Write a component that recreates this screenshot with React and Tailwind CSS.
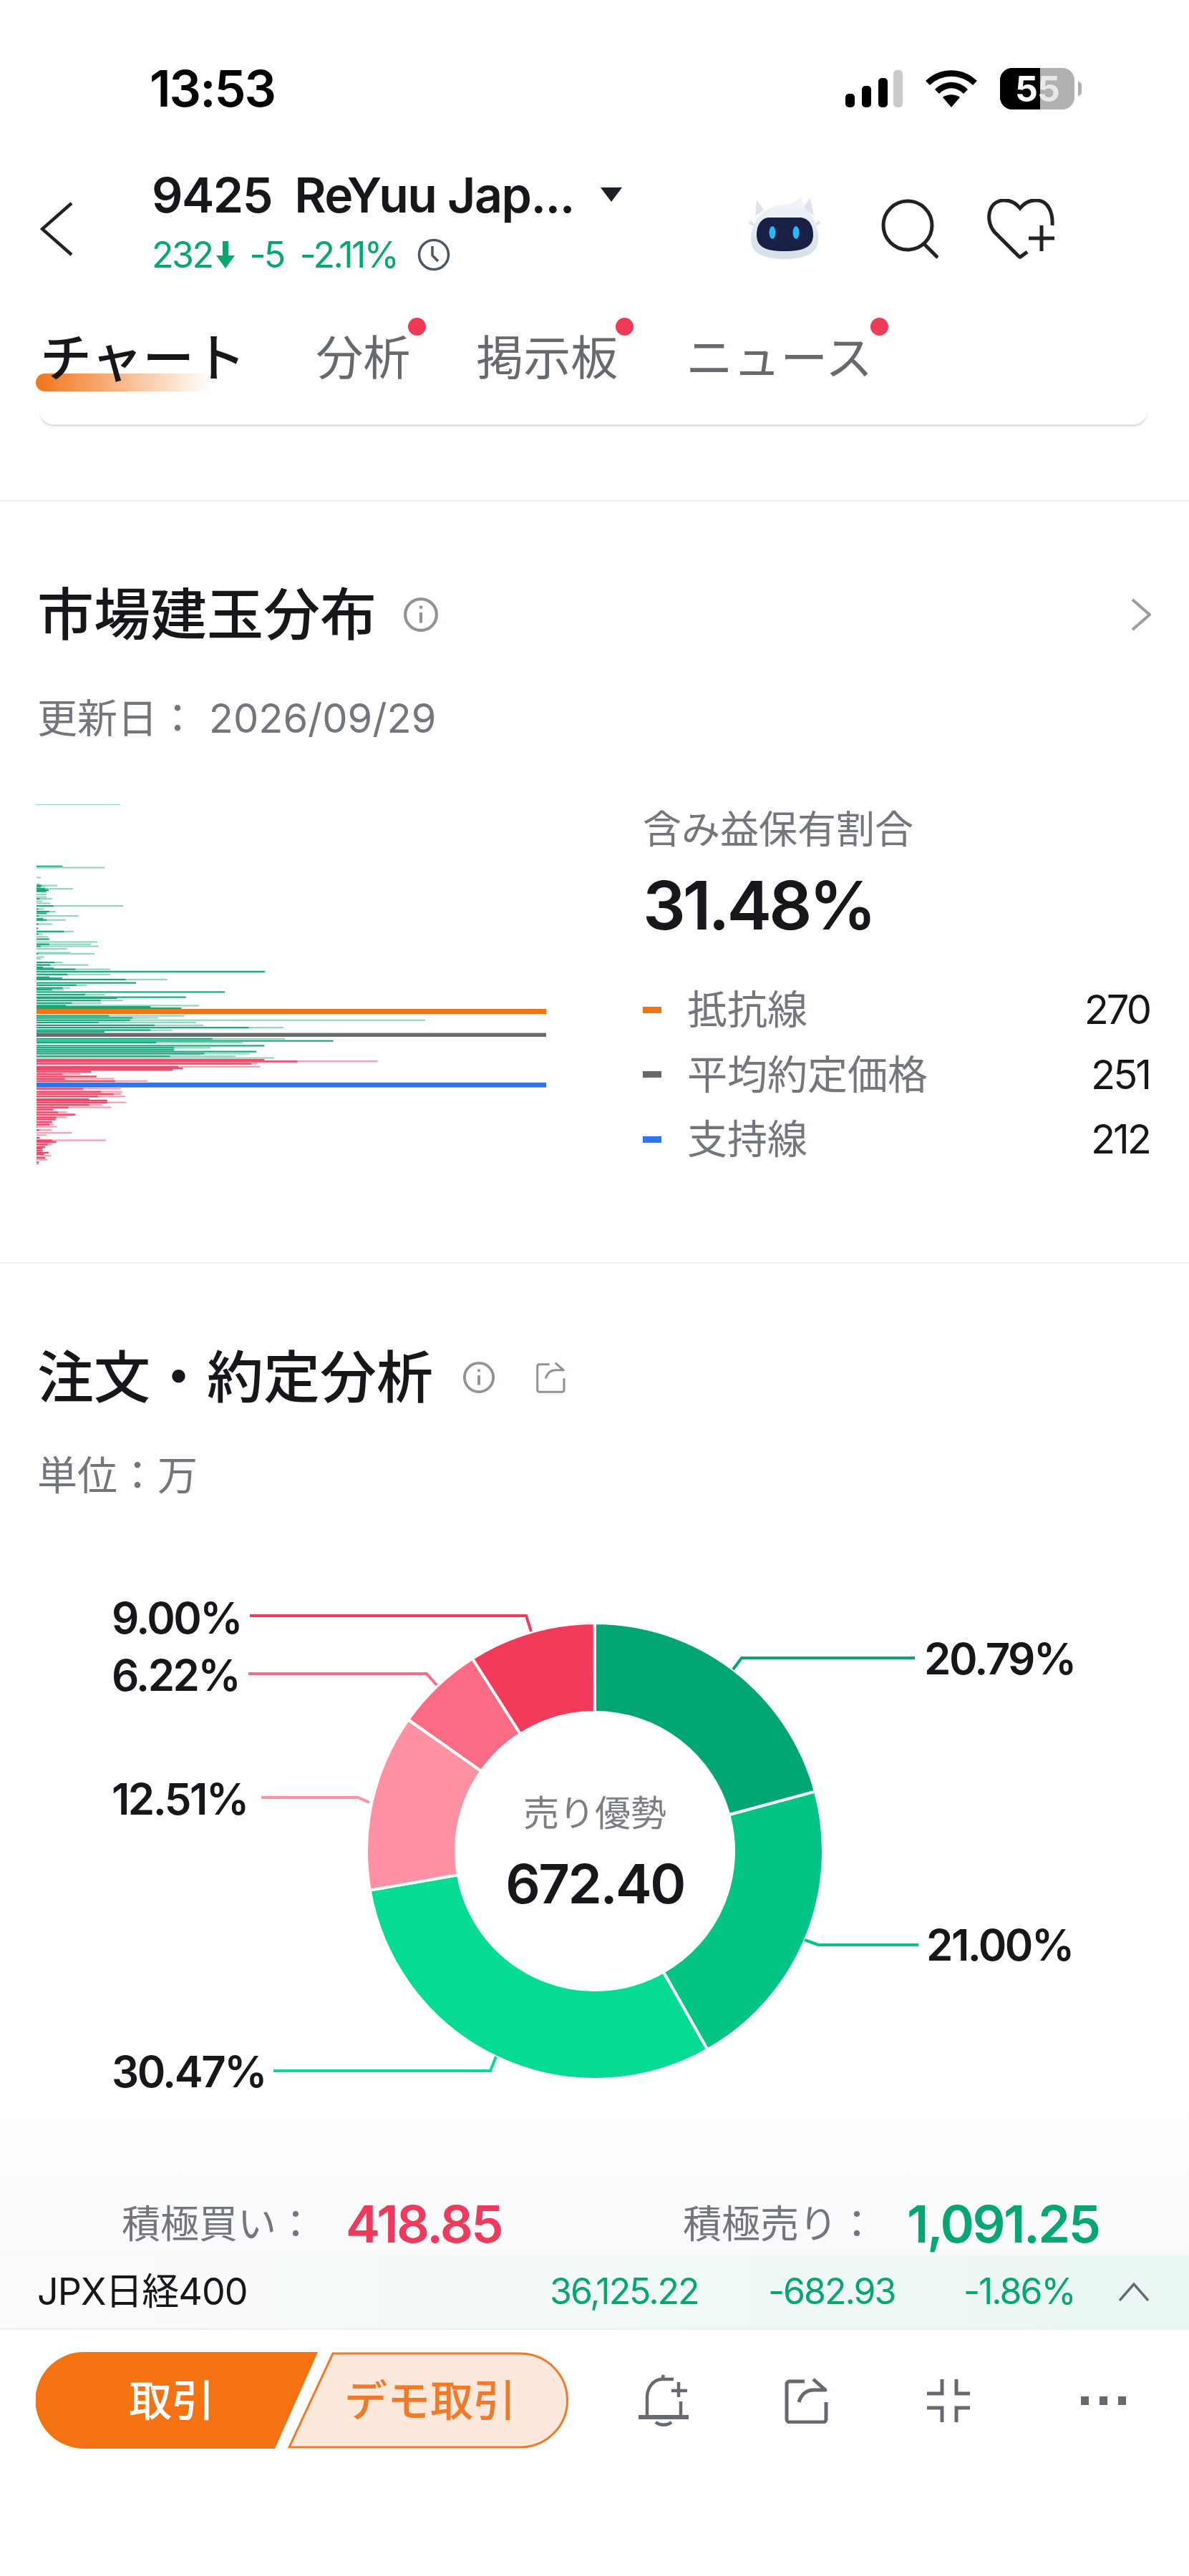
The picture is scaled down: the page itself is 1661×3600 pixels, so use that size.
import React from 'react';

// [y, darkEnd, lightEnd] in chart units: x and y as read off the picture
const bars = [
  [310, 118, 0], [315, 0, 240], [354, 0, 55], [380, 0, 52], [385, 58, 103], [390, 55, 68], [398, 68, 148], [403, 78, 0], [408, 72, 0],
  [420, 0, 72], [430, 0, 72], [437, 52, 88], [447, 0, 60], [455, 0, 83], [465, 92, 293], [477, 48, 65], [487, 80, 98], [494, 72, 0],
  [504, 50, 165], [515, 62, 0], [520, 72, 127], [536, 48, 88], [553, 48, 0], [565, 122, 150], [575, 48, 60], [586, 0, 77], [595, 80, 0],
  [606, 0, 218], [615, 80, 200], [623, 55, 222], [633, 0, 130], [648, 0, 140], [652, 48, 210], [665, 0, 65], [672, 0, 55], [686, 95, 118],
  [696, 82, 193], [705, 62, 0], [709, 93, 0], [713, 155, 255], [722, 702, 0], [733, 132, 256], [744, 80, 0], [748, 117, 0], [753, 300, 421],
  [766, 330, 0], [775, 158, 188], [786, 118, 140], [793, 88, 122], [802, 586, 0], [812, 183, 240], [822, 474, 0], [826, 275, 0], [835, 228, 292],
  [845, 145, 230], [855, 128, 512], [860, 372, 0], [865, 461, 0], [895, 252, 470], [903, 320, 393], [912, 313, 1164], [921, 222, 503],
  [932, 383, 524], [941, 655, 755], [951, 372, 435], [958, 240, 0], [985, 550, 760], [993, 899, 0], [1000, 388, 638], [1012, 700, 0],
  [1020, 440, 545], [1028, 440, 0], [1035, 677, 0], [1043, 527, 658], [1053, 428, 617], [1060, 0, 728],
];
const redBars = [
  [1067, 700, 0], [1073, 795, 1027], [1082, 662, 680], [1094, 452, 688], [1100, 465, 0], [1106, 436, 0], [1113, 200, 0], [1123, 117, 170],
  [1132, 216, 0], [1141, 125, 267], [1150, 270, 362], [1180, 178, 286], [1192, 228, 290], [1201, 265, 288], [1210, 220, 298], [1221, 195, 0],
  [1226, 247, 0], [1234, 247, 302], [1243, 195, 232], [1253, 135, 258], [1262, 92, 0], [1272, 105, 130], [1281, 155, 0], [1292, 100, 131],
  [1300, 98, 0], [1310, 88, 0], [1320, 80, 92], [1329, 45, 102], [1342, 50, 87], [1353, 0, 145], [1362, 0, 72], [1372, 52, 0], [1382, 88, 243],
  [1388, 100, 0], [1398, 75, 87], [1408, 68, 0], [1414, 60, 0], [1422, 60, 0], [1430, 78, 0], [1436, 65, 0], [1443, 0, 85], [1450, 68, 0],
  [1458, 0, 75], [1468, 50, 0], [1475, 0, 48],
];

const segments = [
  { pct: 20.79, color: '#02a672' },
  { pct: 21.0, color: '#04c485' },
  { pct: 30.47, color: '#05dc92' },
  { pct: 12.51, color: '#ff91a3' },
  { pct: 6.22, color: '#fb6c84' },
  { pct: 9.0, color: '#f23b5a' },
];

const leaders = [
  { points: '1024,2333 1036,2317 1278,2317', color: '#02a672' },
  { points: '1124,2711 1143,2718 1283,2718', color: '#04c485' },
  { points: '693,2874 685,2894 382,2894', color: '#05dc92' },
  { points: '516,2519 500,2512 365,2512', color: '#ff91a3' },
  { points: '610,2355 596,2339 347,2339', color: '#fb6c84' },
  { points: '742,2280 735,2258 349,2258', color: '#f23b5a' },
];

const arcPath = (from, to) => {
  const cx = 831, cy = 2587, R = 319, r = 194;
  const pt = (rad, p) => {
    const a = (p / 100) * Math.PI * 2 - Math.PI / 2;
    return `${(cx + rad * Math.cos(a)).toFixed(2)} ${(cy + rad * Math.sin(a)).toFixed(2)}`;
  };
  const large = to - from > 50 ? 1 : 0;
  return `M${pt(R, from)}A${R} ${R} 0 ${large} 1 ${pt(R, to)}L${pt(r, to)}A${r} ${r} 0 ${large} 0 ${pt(r, from)}Z`;
};

const Donut = () => {
  let acc = 0;
  return segments.map((s) => {
    const from = acc;
    acc += s.pct;
    return <path key={s.pct} d={arcPath(from, acc)} fill={s.color} stroke="#fff" strokeWidth="4" />;
  });
};

const ShareIcon = ({ className, width = 4.5, color = '#666a70' }) => (
  <svg viewBox="0 0 62 64" className={className} fill="none" stroke={color} strokeWidth={width} strokeLinejoin="round">
    <path d="M29 5H8a4 4 0 0 0-4 4v49a4 4 0 0 0 4 4h47a4 4 0 0 0 4-4V34" />
    <path d="M41 2 58 17H42C31 17 24 24 21 34" />
  </svg>
);

const InfoIcon = ({ className }) => (
  <svg viewBox="0 0 48 48" className={className} fill="none" stroke="#8f9399" strokeWidth="4">
    <circle cx="24" cy="24" r="21" />
    <path d="M24 21v14" />
    <circle cx="24" cy="14" r="1.5" fill="#8f9399" strokeWidth="1.5" />
  </svg>
);

const Robot = () => (
  <svg viewBox="0 0 102 88" className="w-[102px] h-[88px] mt-[34px]">
    <defs>
      <linearGradient id="robotBody" x1="0" y1="0" x2="0" y2="1">
        <stop offset="0" stopColor="#f4f6f9" />
        <stop offset="1" stopColor="#d5deea" />
      </linearGradient>
    </defs>
    <path d="M10 28 12 5 22 20ZM92 28 87 3 76 16Z" fill="#dce3ec" />
    <path d="M4 34 0 38 12 44ZM98 34 102 38 90 44Z" fill="#dce3ec" />
    <path d="M51 12C60 12 70 6 75 0 76 8 78 14 84 22 95 34 99 50 98 62 97 80 80 88 51 88 22 88 5 80 4 62 3 36 22 12 51 12Z" fill="url(#robotBody)" />
    <path d="M30 30H72C84 30 91 40 91 54 91 70 80 77 51 77 22 77 12 70 12 54 12 40 19 30 30 30Z" fill="#1a2045" />
    <ellipse cx="34" cy="51" rx="4.5" ry="9" fill="#28b8f5" />
    <ellipse cx="67" cy="51" rx="4.5" ry="9" fill="#28b8f5" />
  </svg>
);

const Tab = ({ label, children }) => (
  <div className="relative text-[66px] leading-[80px] text-[#66696e] whitespace-nowrap">
    {label}
    <span className="absolute right-[-22px] top-[-16px] w-[25px] h-[25px] rounded-full bg-[#f03a5a]" />
    {children}
  </div>
);

const LegendRow = ({ swatch, label, value }) => (
  <div className="flex items-center h-[90.5px]">
    <span className={`w-[26px] h-[9px] ${swatch}`} />
    <span className="ml-[36px] text-[56px] text-[#73767c]">{label}</span>
    <span className="ml-auto text-[56px] text-[#15171a] tracking-[-3px]">{value}</span>
  </div>
);

const PctLabel = ({ className, children }) => (
  <div className={`absolute -translate-y-1/2 text-[60px] font-semibold leading-[70px] text-[#15171a] tracking-[-2.5px] ${className}`}>{children}</div>
);

const App = () => {
  return (
    <div className="w-[1661px] h-[3600px] bg-white overflow-hidden font-['Inter','Noto_Sans_CJK_JP',sans-serif]">
      {/* Status bar */}
      <div className="h-[190px] pt-[88px] pl-[209px] flex items-start">
        <div className="text-[70px] leading-[72px] font-semibold text-black tracking-[-2px]">13:53</div>
        <div className="ml-[797px] flex items-center h-[72px]">
          <svg viewBox="0 0 80 52" className="w-[80px] h-[52px]">
            <rect x="0" y="33" width="13" height="19" rx="5" fill="#000" />
            <rect x="23" y="22" width="13" height="30" rx="5" fill="#000" />
            <rect x="46" y="11" width="13" height="41" rx="5" fill="#000" />
            <rect x="67" y="0" width="13" height="52" rx="5" fill="#cbcbcb" />
          </svg>
          <svg viewBox="0 0 72 52" className="w-[72px] h-[52px] ml-[32px]" fill="none" stroke="#000" strokeWidth="8.5">
            <path d="M3 18C22 0 50 0 69 18" />
            <path d="M16 30C28 18 44 18 56 30" />
            <path d="M36 52 24 38C31 33 41 33 48 38Z" fill="#000" stroke="none" />
          </svg>
          <div className="relative ml-[32px] w-[104px] h-[58px] rounded-[17px] overflow-hidden bg-[#b0b0b0] flex">
            <div className="w-[56px] h-full bg-black" />
            <div className="absolute inset-0 flex items-center justify-center text-[50px] font-bold leading-none tracking-[-1px]">
              <span className="text-white">5</span>
              <span className="text-[#e8e8e8]">5</span>
            </div>
          </div>
          <div className="ml-[5px] w-[5px] h-[20px] rounded-r-full bg-[#b0b0b0]" />
        </div>
      </div>

      {/* Stock header */}
      <div className="mt-[50px] h-[144px] flex items-start">
        <svg viewBox="0 0 46 76" className="ml-[56px] mt-[42px] w-[46px] h-[76px]" fill="none" stroke="#222" strokeWidth="4.5">
          <path d="M44 2 3 38 44 74" />
        </svg>
        <div className="ml-[110px] w-[680px]">
          <div className="flex items-center h-[64px]">
            <span className="text-[68px] font-semibold text-[#15171a] whitespace-pre tracking-[-1.5px]">9425  ReYuu Jap...</span>
            <svg viewBox="0 0 30 20" className="ml-[37px] w-[30px] h-[20px]"><path d="M0 0H30L15 20Z" fill="#1d2024" /></svg>
          </div>
          <div className="mt-[24px] h-[56px] flex items-center text-[50px] text-[#05a672] tracking-[-2.5px]">
            <span>232</span>
            <svg viewBox="0 0 26 38" className="w-[26px] h-[38px] ml-[6px]"><path d="M9 0H17V20H26L13 38 0 20H9Z" fill="#05a672" /></svg>
            <span className="ml-[20px]">-5</span>
            <span className="ml-[22px]">-2.11%</span>
            <svg viewBox="0 0 46 46" className="ml-[28px] w-[46px] h-[46px]" fill="none" stroke="#4b5563" strokeWidth="3.5">
              <circle cx="23" cy="23" r="20.5" />
              <path d="M21 11V24L29 32" />
            </svg>
          </div>
        </div>
        <div className="ml-[153px]"><Robot /></div>
        <svg viewBox="0 0 80 84" className="ml-[84px] mt-[38px] w-[80px] h-[84px]" fill="none" stroke="#222" strokeWidth="5">
          <ellipse cx="37" cy="37" rx="34" ry="34" />
          <path d="M60 63 79 82" />
        </svg>
        <svg viewBox="0 0 97 84" className="ml-[66px] mt-[38px] w-[97px] h-[84px]" fill="none" stroke="#222" strokeWidth="5">
          <path d="M58 74 50 80Q48 82 46 80L12 46C0 32 2 4 24 2 36 1 44 8 48 13 52 8 60 1 72 2 88 3 94 20 93 37" />
          <path d="M60 55H96M78 37V73" />
        </svg>
      </div>

      {/* Tabs */}
      <div className="mt-[76px] pl-[56px] flex items-start">
        <div className="relative text-[72px] leading-[80px] font-medium text-[#15171a] whitespace-nowrap">
          <span className="absolute left-[-6px] top-[62px] w-[245px] h-[25px] rounded-l-[14px] rounded-tr-[4px] bg-gradient-to-r from-[#f2741a] to-[#f2741a00]" />
          <span className="relative">チャート</span>
        </div>
        <div className="ml-[98px]"><Tab label="分析" /></div>
        <div className="ml-[92px]"><Tab label="掲示板" /></div>
        <div className="ml-[95px]"><Tab label="ニュース" /></div>
      </div>

      {/* Bottom edge of the chart card */}
      <div className="mt-[36px] mx-[55px] w-[1548px] h-[20px] rounded-b-[22px] border-b-[3px] border-x border-b-[#e2e3e5] border-x-[#f0f0f0] shadow-[0_2px_3px_#0000000a]" />
      <div className="mt-[103px] h-[2px] bg-[#efefef]" />

      {/* Market position distribution */}
      <div className="pt-[113px] pl-[52px] pr-[53px] flex items-center h-[203px]">
        <h2 className="text-[79px] leading-[90px] font-medium text-[#15171a]">市場建玉分布</h2>
        <InfoIcon className="ml-[37px] w-[50px] h-[50px]" />
        <svg viewBox="0 0 28 46" className="ml-auto w-[28px] h-[46px]" fill="none" stroke="#9a9da2" strokeWidth="4">
          <path d="M2 2 26 23 2 44" />
        </svg>
      </div>
      <div className="mt-[68px] pl-[52px] h-[64px] leading-[64px] text-[56px] text-[#73767c] whitespace-pre">更新日： 2026/09/29</div>

      <div className="mt-[64px] h-[560px] flex items-start">
        <svg viewBox="43 0 1470 1568" preserveAspectRatio="none" className="ml-[51px] w-[712px] h-[560px]">
          <rect x="43" y="67" width="242" height="3" fill="#8fd6bf" />
          {bars.map(([y, dark, light]) => (
            <g key={y}>
              {light > 0 && <rect x="43" y={y - 3} width={light - 43} height="6" fill="#8fd6bf" />}
              {dark > 0 && <rect x="43" y={y - 3} width={dark - 43} height="6" fill="#14a87a" />}
            </g>
          ))}
          {redBars.map(([y, dark, light]) => (
            <g key={y}>
              {light > 0 && <rect x="43" y={y - 3} width={light - 43} height="6" fill="#f79aab" />}
              {dark > 0 && <rect x="43" y={y - 3} width={dark - 43} height="7" fill="#f2486a" />}
            </g>
          ))}
          <rect x="43" y="868" width="1470" height="20" fill="#ee7414" />
          <rect x="43" y="962" width="1470" height="15" fill="#66696e" />
          <rect x="43" y="1156" width="1470" height="19" fill="#2f74ec" />
        </svg>
        <div className="ml-[135px] w-[708px] pt-[28px]">
          <div className="text-[54px] leading-[64px] text-[#73767c]">含み益保有割合</div>
          <div className="mt-[18px] text-[94px] leading-[110px] font-semibold text-[#15171a] tracking-[-4px]">31.48%</div>
          <div className="mt-[46px]">
            <LegendRow swatch="bg-[#ee7414]" label="抵抗線" value="270" />
            <LegendRow swatch="bg-[#66696e]" label="平均約定価格" value="251" />
            <LegendRow swatch="bg-[#2f74ec]" label="支持線" value="212" />
          </div>
        </div>
      </div>

      <div className="mt-[104px] h-[2px] bg-[#efefef]" />

      {/* Order and execution analysis */}
      <div className="pt-[114px] pl-[52px] flex items-center h-[204px]">
        <h2 className="text-[79px] leading-[90px] font-medium text-[#15171a]">注文・約定分析</h2>
        <InfoIcon className="ml-[41px] w-[46px] h-[46px]" />
        <ShareIcon className="ml-[56px] w-[42px] h-[44px]" width="4.5" color="#8f9399" />
      </div>
      <div className="mt-[60px] pl-[52px] h-[64px] leading-[64px] text-[56px] text-[#73767c]">単位：万</div>

      <div className="relative mt-[86px] h-[760px]">
        <svg viewBox="0 2180 1661 760" className="absolute inset-0 w-[1661px] h-[760px]">
          <Donut />
          {leaders.map((l) => (
            <polyline key={l.points} points={l.points} fill="none" stroke={l.color} strokeWidth="4" />
          ))}
        </svg>
        <PctLabel className="left-[156px] top-[81px]">9.00%</PctLabel>
        <PctLabel className="left-[156px] top-[161px]">6.22%</PctLabel>
        <PctLabel className="left-[156px] top-[334px]">12.51%</PctLabel>
        <PctLabel className="left-[156px] top-[715px]">30.47%</PctLabel>
        <PctLabel className="left-[1291px] top-[138px]">20.79%</PctLabel>
        <PctLabel className="left-[1294px] top-[538px]">21.00%</PctLabel>
        <div className="absolute left-[631px] top-[324px] w-[400px] text-center">
          <div className="text-[50px] leading-[60px] text-[#7b7e84]">売り優勢</div>
          <div className="mt-[26px] text-[76px] leading-[84px] font-semibold text-[#15171a] tracking-[-2.5px]">672.40</div>
        </div>
      </div>

      {/* Aggressive buy / sell totals */}
      <div className="h-[212px] pt-[128px] pl-[170px] flex items-start bg-gradient-to-b from-white to-[#f9fafb]">
        <div className="w-[784px] flex items-center h-[80px]">
          <span className="text-[54px] text-[#73767c] whitespace-nowrap">積極買い：</span>
          <span className="ml-[43px] text-[72px] font-semibold text-[#ee3a5c] tracking-[-2.5px]">418.85</span>
        </div>
        <div className="flex items-center h-[80px]">
          <span className="text-[54px] text-[#73767c] whitespace-nowrap">積極売り：</span>
          <span className="ml-[43px] text-[72px] font-semibold text-[#05a672] tracking-[-2.5px]">1,091.25</span>
        </div>
      </div>

      {/* Index ticker */}
      <div className="h-[104px] flex items-center pl-[52px] bg-gradient-to-r from-[#fbfcfc] to-[#e9f6f2] border-b-[3px] border-[#f0f1f1]">
        <div className="w-[716px] text-[52px] text-[#15171a] tracking-[-1px]">JPX日経400</div>
        <div className="w-[305px] text-[50px] text-[#05a672] tracking-[-2px]">36,125.22</div>
        <div className="w-[273px] text-[50px] text-[#05a672] tracking-[-2px]">-682.93</div>
        <div className="w-[217px] text-[50px] text-[#05a672] tracking-[-2px]">-1.86%</div>
        <svg viewBox="0 0 42 26" className="w-[42px] h-[26px]" fill="none" stroke="#666a70" strokeWidth="3.5">
          <path d="M1 25 21 2 41 25" />
        </svg>
      </div>

      {/* Bottom action bar */}
      <div className="mt-[31px] pl-[50px] flex items-center h-[135px]">
        <div className="relative w-[394px] h-[135px] flex items-center pl-[130px] text-[60px] font-medium text-white">
          <svg viewBox="0 0 394 135" className="absolute inset-0 w-[394px] h-[135px]">
            <path d="M67 0H394L334 135H67A67.5 67.5 0 0 1 67 0Z" fill="#f57212" />
          </svg>
          <span className="relative">取引</span>
        </div>
        <div className="relative -ml-[43px] w-[393px] h-[135px] flex items-center pl-[80px] text-[60px] font-medium text-[#ee7a2a] whitespace-nowrap">
          <svg viewBox="0 0 393 135" className="absolute inset-0 w-[393px] h-[135px]">
            <path d="M64 2H326A65.5 65.5 0 0 1 326 133H3Z" fill="#fde8dc" stroke="#ee7a2a" strokeWidth="3" />
          </svg>
          <span className="relative">デモ取引</span>
        </div>
        <svg viewBox="0 0 70 74" className="ml-[98px] w-[70px] h-[74px]" fill="none" stroke="#666a70" strokeWidth="4.5">
          <path d="M0 60H70" strokeWidth="6" />
          <path d="M12 58V32C12 20 20 7 33 7H49" />
          <path d="M35 1 33 7" />
          <path d="M59 38V58" />
          <path d="M46 23H68M56 11V32" />
          <path d="M24 67C30 72 40 72 46 67" />
        </svg>
        <ShareIcon className="ml-[133px] w-[62px] h-[64px]" width="5" />
        <svg viewBox="0 0 60 60" className="ml-[138px] w-[60px] h-[60px]" fill="none" stroke="#666a70" strokeWidth="5">
          <path d="M0 20H21V0M41 0V20H60M0 40H21V60M60 40H41V60" />
        </svg>
        <div className="ml-[155px] flex gap-[15px]">
          <span className="w-[11px] h-[12px] bg-[#666a70]" />
          <span className="w-[11px] h-[12px] bg-[#666a70]" />
          <span className="w-[11px] h-[12px] bg-[#666a70]" />
        </div>
      </div>
    </div>
  );
};

export default App;
